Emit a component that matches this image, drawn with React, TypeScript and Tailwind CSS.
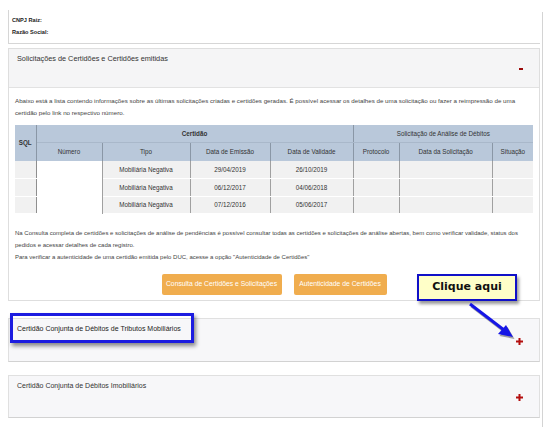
const font = "font-['Liberation_Sans',Arial,sans-serif]";

const rows = [
  { tipo: 'Mobiliária Negativa', emissao: '29/04/2019', validade: '26/10/2019' },
  { tipo: 'Mobiliária Negativa', emissao: '06/12/2017', validade: '04/06/2018' },
  { tipo: 'Mobiliária Negativa', emissao: '07/12/2016', validade: '05/06/2017' },
];

const Plus = () => (
  <svg width="7" height="7" viewBox="0 0 7 7" className="shrink-0">
    <rect x="2.5" y="0" width="2" height="7" fill="#b40f0f" />
    <rect x="0" y="2.5" width="7" height="2" fill="#b40f0f" />
  </svg>
);

export default function App() {
  return (
    <div className={`relative w-[550px] h-[427px] bg-white overflow-hidden text-[#333] ${font}`}>
      <div className="flex">
        <div className="w-[540px] pl-[8px] flex flex-col">
          {/* Top info box */}
          <div className="mt-[10px] h-[34px] border-l border-b border-[#d6d6d6] pl-[3px] pt-[7px] text-[5.6px] font-bold leading-[12px] text-[#222]">
            <div className="leading-[6px]">CNPJ Raiz:</div>
            <div className="leading-[6px] mt-[6px]">Razão Social:</div>
          </div>

          {/* Solicitações panel */}
          <div className="mt-[4px] border border-[#dedede]">
            <div className="h-[39px] bg-[#f5f5f6] border-b border-[#e2e2e2] flex justify-between pl-[8px] pr-[16px]">
              <div className="pt-[5px] text-[7.3px] leading-[10px] text-[#333]">
                Solicitações de Certidões e Certidões emitidas
              </div>
              <div className="self-center mt-[1px] w-[4px] h-[2px] bg-[#9b0a0a]" />
            </div>
            <div className="bg-white px-[6px] pt-[7px] pb-[6px] h-[212px]">
              <p className="text-[6.2px] leading-[12px] text-[#444]">
                Abaixo está a lista contendo informações sobre as últimas solicitações criadas e certidões geradas. É possível acessar os detalhes de uma solicitação ou fazer a reimpressão de uma certidão pelo link no respectivo número.
              </p>
              <table className="mt-[6px] w-[518px] border-collapse table-fixed text-[6.3px] text-[#333]">
                <colgroup>
                  <col className="w-[21px]" />
                  <col className="w-[66px]" />
                  <col className="w-[88px]" />
                  <col className="w-[80px]" />
                  <col className="w-[83px]" />
                  <col className="w-[46px]" />
                  <col className="w-[93px]" />
                  <col className="w-[41px]" />
                </colgroup>
                <thead>
                  <tr className="h-[17px] bg-[#b9c8da]">
                    <th rowSpan={2} className="font-bold border-r border-[#8a97a6] align-middle">SQL</th>
                    <th colSpan={4} className="font-bold border-r border-[#8a97a6] border-b border-b-[#a9b8ca]">Certidão</th>
                    <th colSpan={3} className="font-normal border-b border-b-[#a9b8ca]">Solicitação de Análise de Débitos</th>
                  </tr>
                  <tr className="h-[19px] bg-[#b9c8da]">
                    <th className="font-normal border-r border-[#8a97a6]">Número</th>
                    <th className="font-normal border-r border-[#8a97a6]">Tipo</th>
                    <th className="font-normal border-r border-[#8a97a6]">Data de Emissão</th>
                    <th className="font-normal border-r border-[#8a97a6]">Data de Validade</th>
                    <th className="font-normal border-r border-[#8a97a6]">Protocolo</th>
                    <th className="font-normal border-r border-[#8a97a6]">Data da Solicitação</th>
                    <th className="font-normal">Situação</th>
                  </tr>
                </thead>
                <tbody>
                  {rows.map((r, i) => (
                    <tr key={i} className="h-[17.5px] bg-[#f1f1f1] text-center">
                      <td className="border-b border-white border-r border-r-[#8f8f8f]" />
                      <td className="bg-white border-r border-[#a0a0a0]" />
                      <td className="border-b border-white border-r border-r-[#a0a0a0]">{r.tipo}</td>
                      <td className="border-b border-white border-r border-r-[#a0a0a0]">{r.emissao}</td>
                      <td className="border-b border-white border-r border-r-[#a0a0a0]">{r.validade}</td>
                      <td className="border-b border-white border-r border-r-[#a0a0a0]" />
                      <td className="border-b border-white border-r border-r-[#a0a0a0]" />
                      <td className="border-b border-white" />
                    </tr>
                  ))}
                </tbody>
              </table>
              <p className="mt-[13px] text-[6px] leading-[12px] text-[#444]">
                Na Consulta completa de certidões e solicitações de análise de pendências é possível consultar todas as certidões e solicitações de análise abertas, bem como verificar validade, status dos pedidos e acessar detalhes de cada registro.
                <br />
                Para verificar a autenticidade de uma certidão emitida pelo DUC, acesse a opção "Autenticidade de Certidões"
              </p>
              <div className="mt-[11px] flex justify-center gap-[12px]">
                <button className="h-[21px] w-[120px] rounded-[2px] bg-[#f0ad4e] text-white text-[6.8px]">
                  Consulta de Certidões e Solicitações
                </button>
                <button className="h-[21px] w-[93px] rounded-[2px] bg-[#f0ad4e] text-white text-[6.8px]">
                  Autenticidade de Certidões
                </button>
              </div>
            </div>
          </div>

          {/* Tributos Mobiliários panel */}
          <div className="mt-[17px] h-[44px] bg-[#f7f7f9] border border-[#e0e0e0] border-b-[#d2d2d2] flex justify-between pl-[8px] pr-[16px]">
            <div className="pt-[5px] text-[7px] leading-[10px] text-[#222]">
              Certidão Conjunta de Débitos de Tributos Mobiliários
            </div>
            <div className="self-center mt-[2px]">
              <Plus />
            </div>
          </div>

          {/* Imobiliários panel */}
          <div className="mt-[13px] h-[43px] bg-[#f7f7f9] border border-[#e0e0e0] border-b-[#d2d2d2] flex justify-between pl-[8px] pr-[16px]">
            <div className="pt-[5px] text-[7px] leading-[10px] text-[#333]">
              Certidão Conjunta de Débitos Imobiliários
            </div>
            <div className="self-center mt-[1px]">
              <Plus />
            </div>
          </div>
        </div>
        <div className="mt-[12px] ml-[2px] w-px h-[415px] bg-[#d4d4d4]" />
      </div>

      {/* Highlight annotation */}
      <div className="absolute left-[10px] top-[313px] w-[184px] h-[30px] border-[3px] border-[#1c1ce0] shadow-[2px_3px_4px_rgba(0,0,0,0.45)]" />

      {/* Callout */}
      <div className="absolute left-[417px] top-[274px] w-[100px] h-[27px] bg-[#ffffc8] border-2 border-[#1010c8] shadow-[2px_3px_3px_rgba(0,0,0,0.4)] flex items-center justify-center">
        <span className="font-['DejaVu_Sans',Verdana,sans-serif] font-bold text-[11px] text-[#111]">Clique aqui</span>
      </div>
      <svg className="absolute left-[460px] top-[298px]" width="60" height="45" viewBox="0 0 60 45">
        <g transform="translate(1.5,2)" opacity="0.35">
          <line x1="10" y1="6" x2="44" y2="32" stroke="#000" strokeWidth="3" />
          <polygon points="53,39 38,36 46,27" fill="#000" />
        </g>
        <line x1="10" y1="6" x2="44" y2="32" stroke="#1616e6" strokeWidth="3" />
        <polygon points="53,39 38,36 46,27" fill="#1616e6" />
      </svg>
    </div>
  );
}
